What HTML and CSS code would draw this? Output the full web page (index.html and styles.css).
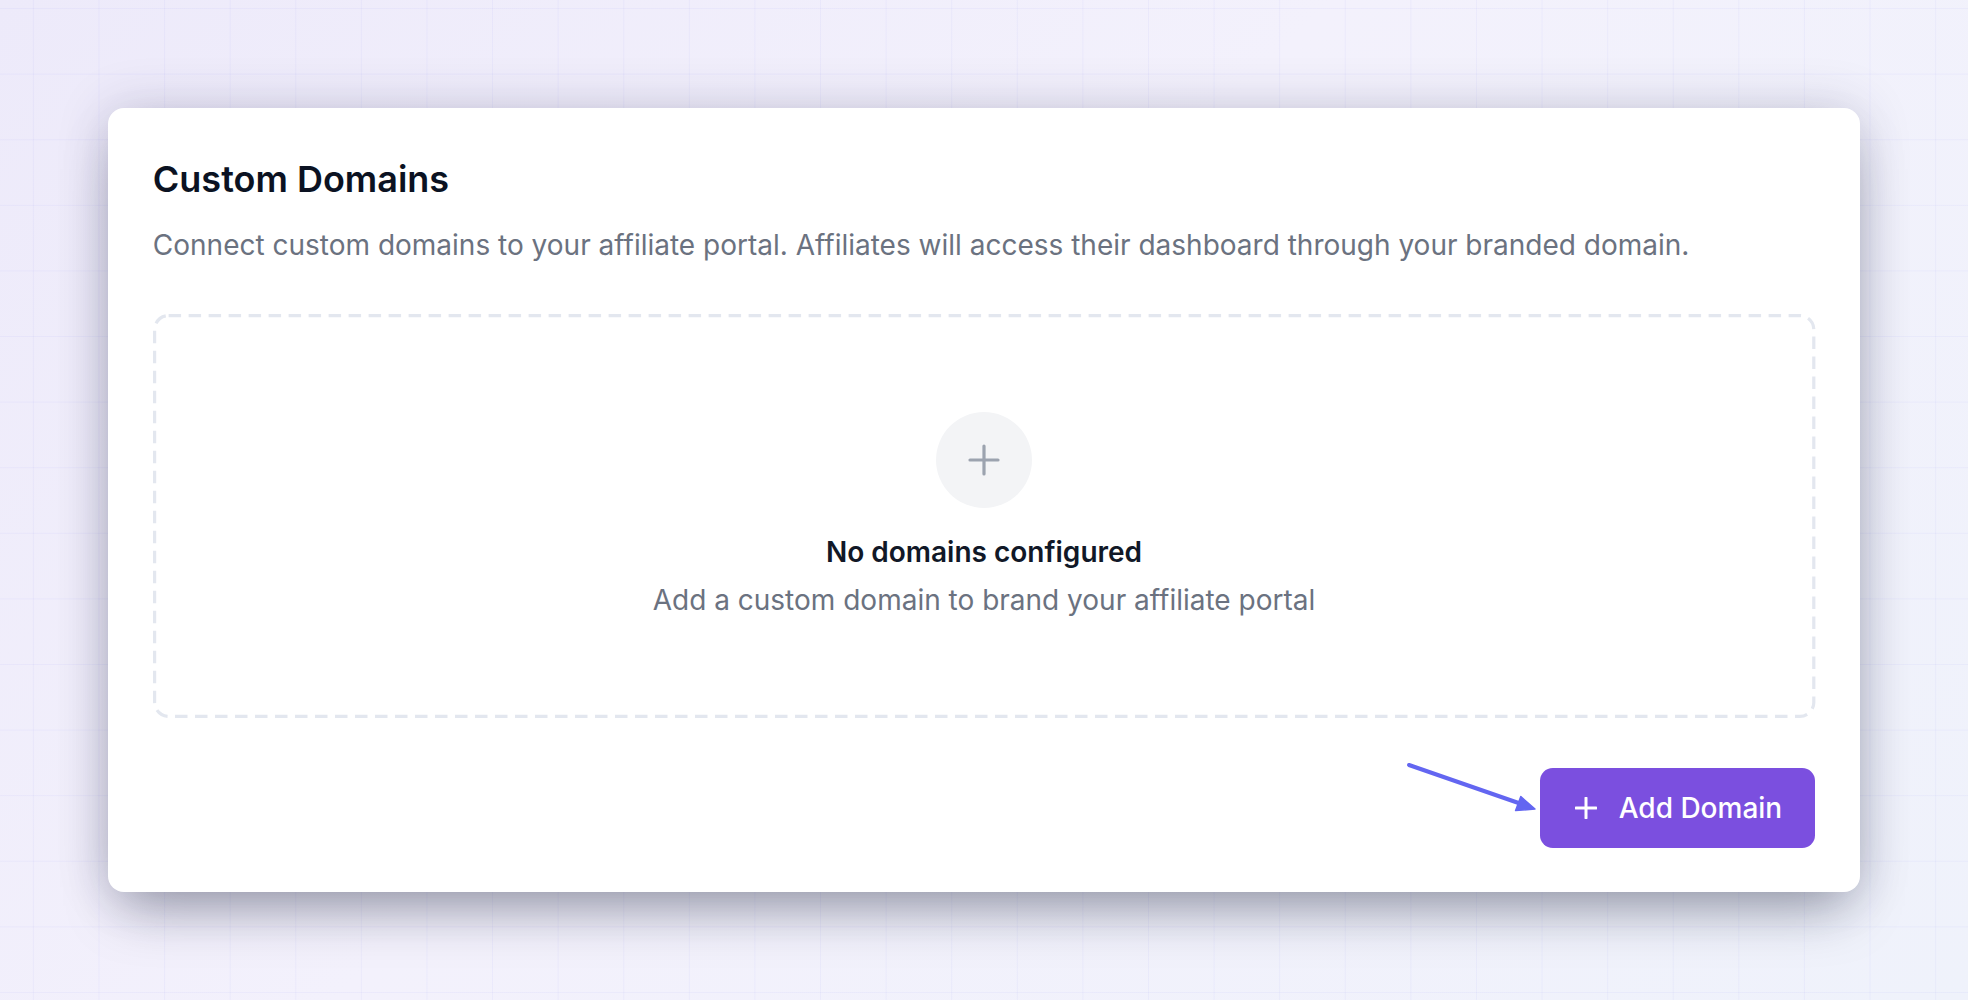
FILE: index.html
```html
<!DOCTYPE html>
<html lang="en">
<head>
<meta charset="utf-8">
<title>Custom Domains</title>
<link rel="stylesheet" href="styles.css">
</head>
<body>
  <main class="page">
    <section class="card">
      <h1 class="card-title">Custom Domains</h1>
      <p class="card-desc">Connect custom domains to your affiliate portal. Affiliates will access their dashboard through your branded domain.</p>

      <div class="empty">
        <svg class="empty-border" preserveAspectRatio="none" aria-hidden="true">
          <rect x="1.6" y="1.6" width="calc(100% - 3.2px)" height="calc(100% - 3.2px)" rx="14" ry="14"></rect>
        </svg>
        <div class="empty-icon">
          <svg viewBox="0 0 32 32" width="32" height="32" aria-hidden="true">
            <path d="M16 2v28M2 16h28"></path>
          </svg>
        </div>
        <h2 class="empty-title">No domains configured</h2>
        <p class="empty-sub">Add a custom domain to brand your affiliate portal</p>
      </div>

      <div class="card-footer">
        <div class="cta">
          <svg class="pointer" viewBox="0 0 140 66" width="140" height="66" aria-hidden="true">
            <line x1="5" y1="11" x2="116" y2="49.5"></line>
            <polygon points="131,55 116.8,42.6 111.6,56.6"></polygon>
          </svg>
          <button class="btn-primary" type="button">
            <svg viewBox="0 0 22 22" width="22" height="22" aria-hidden="true">
              <path d="M11 1v20M1 11h20"></path>
            </svg>
            <span>Add Domain</span>
          </button>
        </div>
      </div>
    </section>
  </main>
</body>
</html>
```

FILE: styles.css
```css
* {
  box-sizing: border-box;
}

html,
body {
  margin: 0;
  height: 100%;
}

body {
  font-family: "Inter", "Noto Sans", "Liberation Sans", sans-serif;
  background-color: #f1effb;
  background-image:
    linear-gradient(rgba(99, 102, 241, 0.055) 1px, transparent 1px),
    linear-gradient(90deg, rgba(99, 102, 241, 0.055) 1px, transparent 1px),
    linear-gradient(135deg, #edeafa 0%, #f3f1fc 45%, #eff2fb 100%);
  background-size: 65.6px 65.6px, 65.6px 65.6px, 100% 100%;
  background-position: center, center, 0 0;
  overflow: hidden;
}

.page {
  padding: 108px;
}

/* Card */
.card {
  background: #ffffff;
  border-radius: 16px;
  padding: 49px 44.8px 44px;
  box-shadow:
    0 28px 56px -14px rgba(15, 23, 42, 0.36),
    0 0 52px rgba(40, 40, 90, 0.19);
}

.card-title {
  margin: 0;
  font-size: 36px;
  line-height: 44.8px;
  font-weight: 600;
  color: #0b1222;
}

.card-desc {
  margin: 23.8px 0 0;
  font-size: 28px;
  line-height: 38.4px;
  color: #6b7280;
}

/* Empty state */
.empty {
  position: relative;
  margin-top: 50px;
  padding: 98px 24px 98.2px;
  display: flex;
  flex-direction: column;
  align-items: center;
  text-align: center;
}

.empty-border {
  position: absolute;
  inset: 0;
  width: 100%;
  height: 100%;
  overflow: visible;
}

.empty-border rect {
  fill: none;
  stroke: #e3e7ef;
  stroke-width: 3.2;
  stroke-dasharray: 12.5 7.5;
}

.empty-icon {
  width: 96px;
  height: 96px;
  border-radius: 50%;
  background: #f3f4f6;
  display: flex;
  align-items: center;
  justify-content: center;
}

.empty-icon path {
  fill: none;
  stroke: #9ca3af;
  stroke-width: 3.2;
  stroke-linecap: round;
}

.empty-title {
  margin: 25px 0 0;
  font-size: 28px;
  line-height: 38.4px;
  font-weight: 600;
  color: #111827;
}

.empty-sub {
  margin: 10px 0 0;
  font-size: 28px;
  line-height: 38.4px;
  color: #6b7280;
}

/* Footer */
.card-footer {
  margin-top: 50px;
  display: flex;
  justify-content: flex-end;
}

.cta {
  position: relative;
}

.pointer {
  position: absolute;
  right: calc(100% - 4px);
  top: -14px;
}

.pointer line {
  stroke: #6366f1;
  stroke-width: 4;
  stroke-linecap: round;
}

.pointer polygon {
  fill: #6366f1;
  stroke: #6366f1;
  stroke-width: 1.5;
  stroke-linejoin: round;
}

.btn-primary {
  display: flex;
  align-items: center;
  gap: 21.5px;
  height: 80px;
  padding: 0 33px 0 35px;
  border: 0;
  border-radius: 12.8px;
  background: #7b4fdf;
  color: #ffffff;
  font-family: inherit;
  font-size: 28px;
  font-weight: 500;
  cursor: pointer;
}

.btn-primary path {
  fill: none;
  stroke: #ffffff;
  stroke-width: 3;
  stroke-linecap: round;
}
```
